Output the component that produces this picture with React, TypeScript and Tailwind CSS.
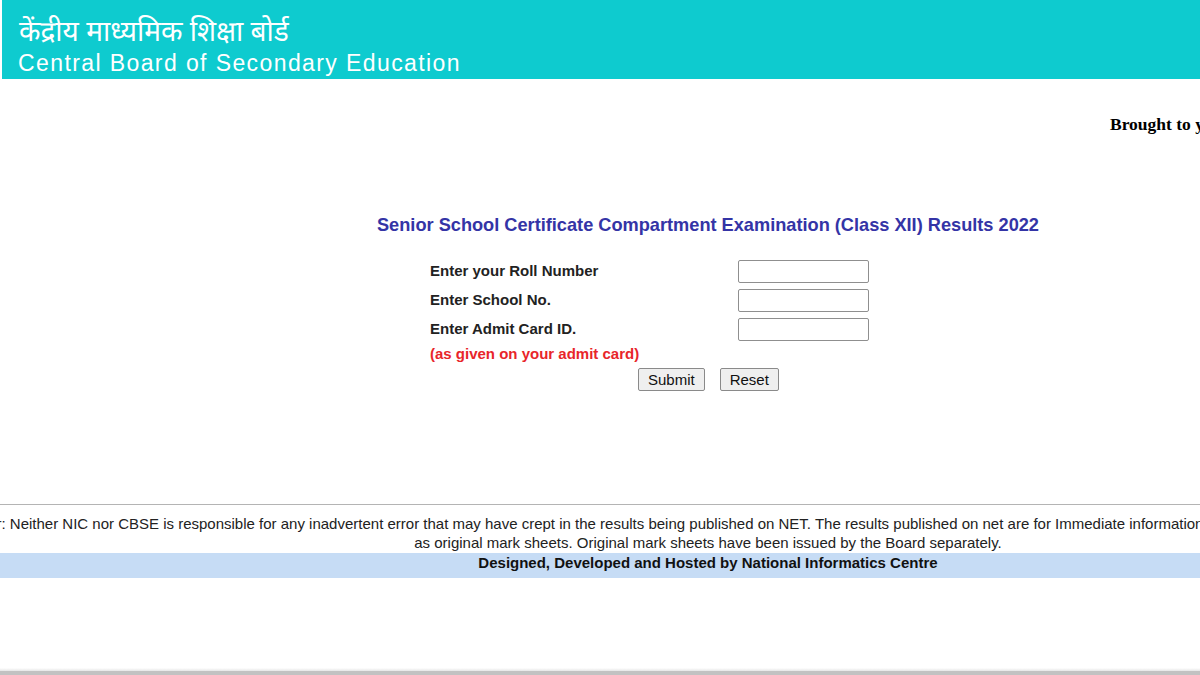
import React from 'react';

const fields = ['Enter your Roll Number', 'Enter School No.', 'Enter Admit Card ID.'];

export default function App() {
  return (
    <div className="relative flex h-[675px] w-[1200px] flex-col overflow-hidden bg-white font-['Liberation_Sans',Arial,sans-serif] text-black">
      {/* header banner */}
      <div className="ml-[2px] flex h-[79px] flex-col bg-[#0ecbcf] pl-[16px] text-white">
        <div className="mt-[19px] pl-[1px] font-['Noto_Sans_Devanagari','Noto_Sans','Lohit_Devanagari',sans-serif] text-[28px] leading-[30px]">
          केंद्रीय माध्यमिक शिक्षा बोर्ड
        </div>
        <div className="mt-[1px] text-[23px] leading-[26px] tracking-[1.4px]">Central Board of Secondary Education</div>
      </div>

      {/* main content, centred on x=708 */}
      <div className="ml-[-92px] flex w-[1600px] flex-col">
        <div className="mt-[36px] pl-[1202px] font-['Liberation_Serif','Times_New_Roman',serif] text-[17.5px] font-bold leading-[18px] whitespace-nowrap">
          Brought to you by
        </div>

        <h1 className="mt-[82px] text-center text-[18.2px] font-bold leading-[21px] text-[#3434a6]">
          Senior School Certificate Compartment Examination (Class XII) Results 2022
        </h1>

        <div className="mt-[24px] flex flex-col pl-[522px]">
          {fields.map((f) => (
            <div key={f} className="flex h-[29px] items-start">
              <div className="w-[308px] pt-[2px] text-[15px] font-bold leading-[18px] text-[#222]">{f}</div>
              <input
                type="text"
                className="h-[23px] w-[131px] rounded-[2px] border border-[#8f8f8f] bg-white"
              />
            </div>
          ))}
          <div className="mt-[-2px] text-[15px] font-bold leading-[18px] text-[#e8252a]">(as given on your admit card)</div>
          <div className="mt-[5px] flex gap-[15px] pl-[208px]">
            <button className="h-[23px] rounded-[2px] border border-[#8a8a8a] bg-[#efefef] px-[9px] text-[15px] leading-[20px] text-[#111]">
              Submit
            </button>
            <button className="h-[23px] rounded-[2px] border border-[#8a8a8a] bg-[#efefef] px-[9px] text-[15px] leading-[20px] text-[#111]">
              Reset
            </button>
          </div>
        </div>
      </div>

      {/* disclaimer */}
      <div className="mt-[113px] border-t border-[#b4b4b4]" />
      <div className="ml-[-92px] flex w-[1600px] flex-col pt-[9px] text-center text-[15px] leading-[19px] whitespace-nowrap text-[#222]">
        <div className="pl-[8px]">
          Disclaimer: Neither NIC nor CBSE is responsible for any inadvertent error that may have crept in the results being published on NET. The results published on net are for Immediate information to the examinees. These cannot be treated
        </div>
        <div>as original mark sheets. Original mark sheets have been issued by the Board separately.</div>
      </div>
      <div className="mt-[1px] h-[25px] bg-[#c6dcf5]">
        <div className="ml-[-92px] w-[1600px] text-center text-[15px] font-bold leading-[19px] text-[#111]">
          Designed, Developed and Hosted by National Informatics Centre
        </div>
      </div>

      <div className="mt-auto h-[3px] bg-gradient-to-b from-white to-[#e6e6e6]" />
      <div className="h-[4px] bg-[#c2c2c2]" />
    </div>
  );
}
